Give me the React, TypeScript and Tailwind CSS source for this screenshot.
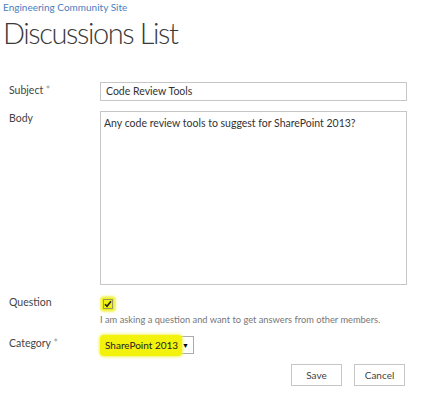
export default function App() {
  const ui = { fontFamily: 'Lato, "Open Sans", Arial, sans-serif' };

  return (
    <div className="w-[448px] h-[399px] bg-white overflow-hidden text-[#444]" style={ui}>
      {/* Breadcrumb + title */}
      <div className="pl-[3px] pt-[1px]">
        <div className="text-[10px] leading-[12px] text-[#4a80c0]">Engineering Community Site</div>
        <h1 className="mt-[3px] text-[29px] leading-[34px] font-light tracking-[-1.4px] text-[#3a3a3a]">
          Discussions List
        </h1>
      </div>

      {/* Form */}
      <div className="mt-[32px] pl-[9px] text-[10.5px]">
        <div className="flex">
          <div className="w-[91px] pt-[1px] leading-[14px]">
            Subject <span className="text-[#999]">*</span>
          </div>
          <div className="w-[307px] h-[19px] border border-[#c6c6c6] px-[5px] leading-[17px] text-[10.5px] text-[#333]">
            Code Review Tools
          </div>
        </div>

        <div className="flex mt-[10px]">
          <div className="w-[91px] leading-[14px]">Body</div>
          <div className="w-[307px] h-[174px] border border-[#c6c6c6] px-[3px] pt-[4px] leading-[14px] text-[10.5px] text-[#333]">
            Any code review tools to suggest for SharePoint 2013?
          </div>
        </div>

        <div className="flex mt-[13px]">
          <div className="w-[91px] leading-[14px] -mt-[3px]">Question</div>
          <div className="flex flex-col">
            <div className="ml-[2px] w-[12px] h-[12px] bg-[#f0f012] rounded-[2px] shadow-[0_0_2px_2px_#f3f35a] flex items-center justify-center">
              <div className="w-[10px] h-[10px] border border-[#9a9a60] flex items-center justify-center">
                <svg width="8" height="8" viewBox="0 0 8 8">
                  <path d="M1 4.2 L3 6.3 L7 1.3" fill="none" stroke="#222" strokeWidth="1.6" />
                </svg>
              </div>
            </div>
            <div className="mt-[3px] text-[9.3px] leading-[13px] text-[#777]">
              I am asking a question and want to get answers from other members.
            </div>
          </div>
        </div>

        <div className="flex mt-[10px]">
          <div className="w-[91px] leading-[14px]">
            Category <span className="text-[#999]">*</span>
          </div>
          <div className="ml-[1px] w-[93px] h-[18px] border border-[#ababab] flex items-center relative">
            <div className="absolute left-[-2px] top-[-2px] w-[82px] h-[21px] bg-[#f2f20c] rounded-[4px] shadow-[0_0_3px_1px_#f3f35a]" />
            <span className="relative pl-[3px] whitespace-nowrap text-[10px] leading-[16px] text-[#222]">
              SharePoint 2013
            </span>
            <span className="relative ml-auto mr-[4px] text-[7px] text-black">▼</span>
          </div>
        </div>

        <div className="flex justify-end w-[396px] mt-[10px] gap-[12px] text-[10px] text-[#444]">
          <div className="w-[51px] h-[22px] border border-[#c6c6c6] flex items-center justify-center">Save</div>
          <div className="w-[51px] h-[22px] border border-[#c6c6c6] flex items-center justify-center">Cancel</div>
        </div>
      </div>
    </div>
  );
}
